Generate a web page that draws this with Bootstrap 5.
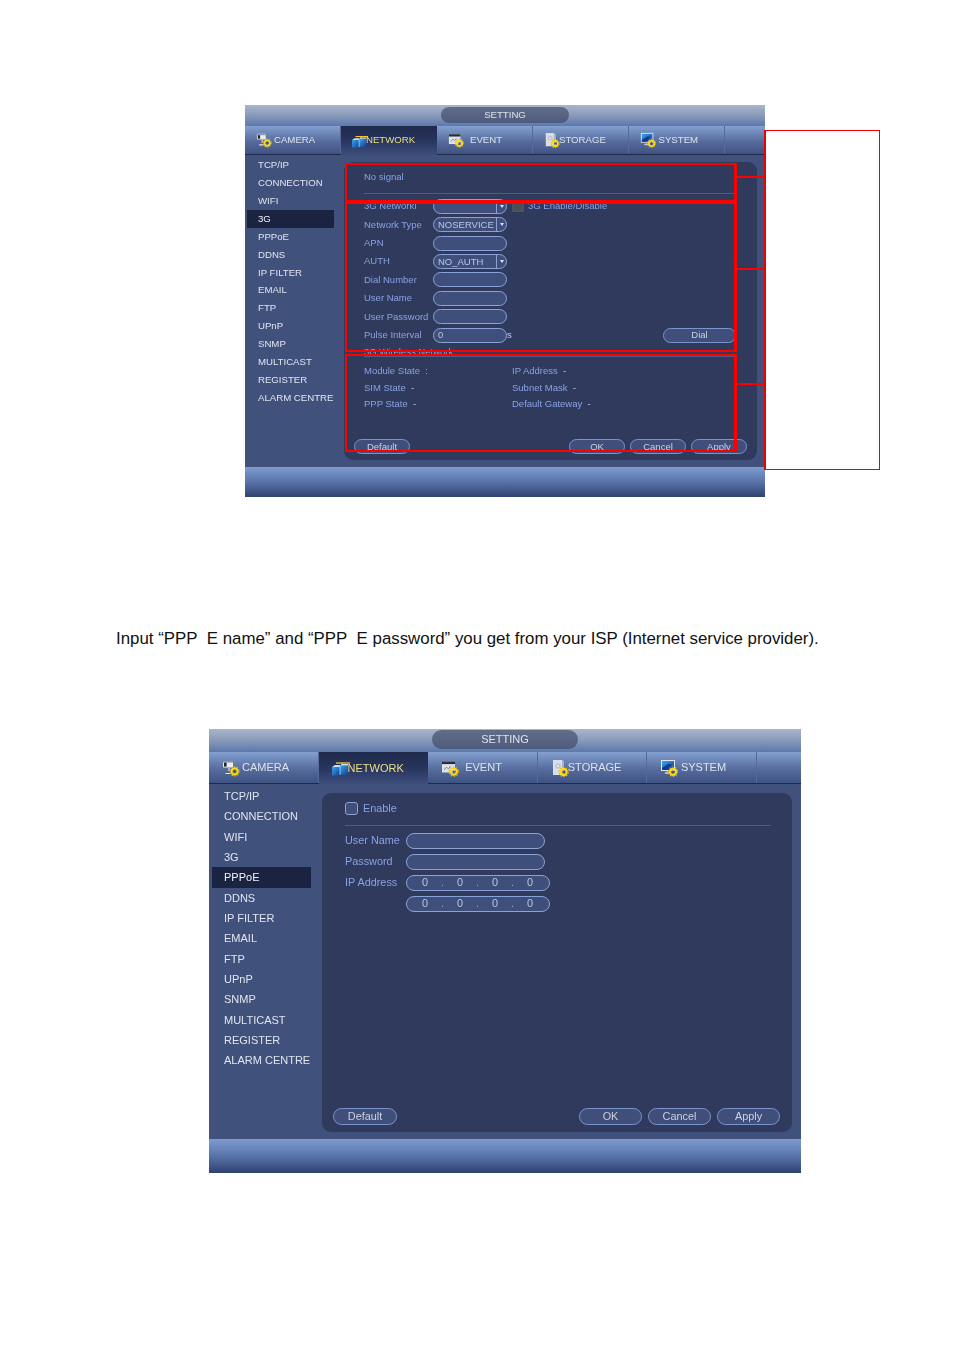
<!DOCTYPE html>
<html lang="en">
<head>
<meta charset="utf-8">
<title>PPPoE setting</title>
<link rel="stylesheet" href="https://cdn.jsdelivr.net/npm/bootstrap@5.3.0/dist/css/bootstrap.min.css">
<style>
html,body{background:#fff;margin:0}
body{font-family:"Liberation Sans",Arial,sans-serif;color:#000;height:1350px;overflow:hidden}
.shot-wrap{position:relative}
.wrap-a{margin:105px 0 0 245px;width:520px}
.wrap-b{margin:0 0 0 209px;width:592px}
.dvr{background:#40517c;display:flex;flex-direction:column;filter:blur(.4px);overflow:hidden}
.dvr-a{--fs:9.65px;--fa:9.5px;--ic:16px;height:392px;--top:21px;--tabs:29px;--foot:30px;--tabw:96px;--pill:128px;--pillh:16px;--icl:11px;--side:99px;--item:17.93px;--sel:87px;--seli:11px;--sm:2px;--pt:2px}
.dvr-b{--fs:11px;--fa:10.85px;--ic:18px;height:444px;--top:23px;--tabs:32px;--foot:34px;--tabw:109.6px;--pill:146px;--pillh:19px;--icl:13px;--side:113px;--item:20.33px;--sel:99px;--seli:12px;--sm:3px;--pt:1px}
.dvr-top{height:var(--top);flex:none;background:linear-gradient(#a9b6ca,#8c9dbb 45%,#5d78ad);padding-top:var(--pt)}
.dvr-pill{width:var(--pill);height:var(--pillh);border-radius:calc(var(--pillh)/2);background:linear-gradient(#626d86,#4d5b7f);color:#dfe3ea;font-size:var(--fs);line-height:var(--pillh)}
.dvr-tabs{height:var(--tabs);flex:none;background:linear-gradient(#83a0d0,#566c9c 55%,#3f5383);border-bottom:1px solid #1e2a4a;flex-wrap:nowrap}
.dvr-tab{width:var(--tabw);flex:none;padding:0 0 0 var(--icl);border-right:1px solid #56699a;color:#dde2ee;font-size:var(--fs);white-space:nowrap;height:100%}
.dvr-tab:hover,.dvr-tab:focus{color:#dde2ee}
.dvr-tab svg{width:var(--ic);height:var(--ic);flex:none}
.dvr-tab.is-on{background:linear-gradient(#1f2a4b,#26335a 45%,#3d4e7b);color:#ecdf86;border-right:0;height:calc(100% + 1px)}
.gap1 svg{margin-right:2px}.gap2 svg{margin-right:-2px}.gap3 svg{margin-right:6px}.gap4 svg{margin-right:-1px}.gap5 svg{margin-right:2.5px}
.dvr-body{flex:1 1 auto;min-height:0}
.dvr-side{width:var(--side);flex:none;padding-top:1px}
.dvr-b .dvr-side{padding-top:2px}
.dvr-link{display:block;width:var(--sel);margin-left:var(--sm);padding:0 0 0 var(--seli);height:var(--item);line-height:var(--item);color:#e1e5ef;font-size:var(--fs);white-space:nowrap}
.dvr-link:hover,.dvr-link:focus{color:#e1e5ef}
.dvr-link.is-on{background:#1a2340;color:#f1f3f8}
.dvr-panel{background:#303a5c;border-radius:9px}
.dvr-a .dvr-panel{width:413px;height:298px;margin:7px 0 0 0;padding:6px 10px 6px}
.dvr-b .dvr-panel{width:470px;height:339px;margin:9px 0 0 0;padding:5px 12px 7px 11px}
.dvr-area{font-size:var(--fa);color:#88a2e6}
.dvr-a .dvr-area{padding:0 10px}
.dvr-b .dvr-area{padding:0 9px 0 12px}
.dvr-rule{height:1px;background:#4c5c86}
.dvr-a .line-h{height:18px}
.dvr-a .line-f{height:18.43px}
.dvr-a .lab{width:69px;flex:none;white-space:nowrap}
.dvr-b .line-h{height:20px}
.dvr-b .line-f{height:21px}
.dvr-b .lab{width:61px;flex:none;white-space:nowrap}
.dvr-a .mt-rule{margin-top:7px}
.dvr-a .mt-first{margin-top:3px}
.dvr-b .mt-rule{margin-top:7px}
.dvr-b .mt-first{margin-top:3.5px}
.form-control.dvr-field{flex:none;min-height:0;padding:0 0 0 4px;background:#3f4f7b;border:1px solid #8ba2d8;border-radius:8px;color:#bcc5dc;font-size:var(--fa);line-height:1;box-shadow:none;font-family:inherit}
.dvr-a .form-control.dvr-field{width:74px;height:15px}
.dvr-b .form-control.dvr-field{width:139px;height:16px;margin-top:1.5px}
.dvr-b .form-control.dvr-ip{width:144px;padding-left:14px}
.dvr-ip i{font-style:normal;display:block;text-align:center;flex:none}
.dvr-ip .z{width:8px}.dvr-ip .d{width:27px;color:#97a4c6}
.dvr-arrow{margin-left:auto;width:10px;height:100%;border-left:1px solid #8ba2d8;flex:none;position:relative}
.dvr-arrow::after{content:"";position:absolute;left:3px;top:5px;border:2px solid transparent;border-top:3px solid #dfe4f0}
.form-check-input.dvr-chk{margin:0;flex:none;background-color:#3f4f7b;border:1px solid #8ba2d8;border-radius:3px;width:13px;height:13px}
.dvr-chk-txt{margin-left:5px}
.form-check-input.dvr-chk-off{background-color:#4c4f58;border-color:#53565f;width:12px;height:11px;margin:0 4px 0 5px;border-radius:1px;opacity:1}
.dvr-legend{height:9px;line-height:9px;white-space:nowrap;margin-top:3px}
.dvr-a .stat-line{height:16.5px}
.dvr-a .stat-c{width:148px;flex:none;white-space:nowrap}
.stat-v{color:#c8d0e4}
.dvr-a .mt-stat{margin-top:5.5px}
.btn.dvr-btn{padding:0;background:#3f4e7b;border:1px solid #7c94cc;color:#ccd1df;font-size:var(--fa);line-height:1;font-family:inherit;flex:none;display:flex;align-items:center;justify-content:center}
.dvr-a .btn.dvr-btn{width:56px;height:15px;border-radius:8px}
.dvr-a .btn.dvr-dial{width:73px;margin-right:1px}
.dvr-b .btn.dvr-btn{width:63px;height:17px;border-radius:9px}
.dvr-b .btn.dvr-wide{width:64px}
.dvr-a .dvr-foot{gap:5px}
.dvr-b .dvr-foot{gap:6px}
.dvr-bottom{height:var(--foot);flex:none;background:linear-gradient(#7d9ccf,#5d78ae 45%,#2f4270);margin-top:0}
.mark-box{position:absolute;border:2px solid #f00;pointer-events:none}
.mark-r{border-right-width:3.5px}
.mark-1{left:100px;top:58px;width:392px;height:38.5px}
.mark-2{left:100px;top:96.5px;width:392px;height:150.5px}
.mark-3{left:100px;top:249px;width:392px;height:98px}
.mark-line{position:absolute;left:492px;width:27px;height:2px;background:#f00}
.ml-1{top:70.5px}.ml-2{top:162.5px}.ml-3{top:278px}
.mark-brace{position:absolute;left:518.5px;top:24.5px;width:116.5px;height:340px;border:1px solid #e00;border-left-width:2px;border-top-width:1.5px}
.doc-text{margin:130px 0 78px 116px;font-size:16.85px;line-height:24px;white-space:nowrap;color:#111}
</style>
</head>
<body>
<svg width="0" height="0" class="d-block position-absolute">
  <defs>
    <g id="gear">
      <circle cx="0" cy="0" r="3.1" fill="none" stroke="#ffdc14" stroke-width="2.1"/>
      <circle cx="0" cy="0" r="4.6" fill="none" stroke="#e0bc0c" stroke-width="1.2" stroke-dasharray="1.4 1.5"/>
      <circle cx="0" cy="0" r="1.2" fill="#5a5a3a"/>
    </g>
  </defs>
</svg>

<div class="shot-wrap wrap-a">
  <div class="dvr dvr-a">
    <div class="dvr-top d-flex justify-content-center"><div class="dvr-pill text-center">SETTING</div></div>
    <nav class="nav dvr-tabs">
      <a class="nav-link dvr-tab gap1 d-flex align-items-center" href="#"><svg viewBox="0 0 18 18"><use href="#ic-cam"/></svg>CAMERA</a>
      <a class="nav-link dvr-tab gap2 is-on d-flex align-items-center" href="#"><svg viewBox="0 0 18 18"><use href="#ic-net"/></svg>NETWORK</a>
      <a class="nav-link dvr-tab gap3 d-flex align-items-center" href="#"><svg viewBox="0 0 18 18"><use href="#ic-evt"/></svg>EVENT</a>
      <a class="nav-link dvr-tab gap4 d-flex align-items-center" href="#"><svg viewBox="0 0 18 18"><use href="#ic-sto"/></svg>STORAGE</a>
      <a class="nav-link dvr-tab gap5 d-flex align-items-center" href="#"><svg viewBox="0 0 18 18"><use href="#ic-sys"/></svg>SYSTEM</a>
    </nav>
    <div class="dvr-body d-flex">
      <div class="dvr-side">
        <a class="dvr-link text-decoration-none" href="#">TCP/IP</a>
        <a class="dvr-link text-decoration-none" href="#">CONNECTION</a>
        <a class="dvr-link text-decoration-none" href="#">WIFI</a>
        <a class="dvr-link text-decoration-none is-on" href="#">3G</a>
        <a class="dvr-link text-decoration-none" href="#">PPPoE</a>
        <a class="dvr-link text-decoration-none" href="#">DDNS</a>
        <a class="dvr-link text-decoration-none" href="#">IP FILTER</a>
        <a class="dvr-link text-decoration-none" href="#">EMAIL</a>
        <a class="dvr-link text-decoration-none" href="#">FTP</a>
        <a class="dvr-link text-decoration-none" href="#">UPnP</a>
        <a class="dvr-link text-decoration-none" href="#">SNMP</a>
        <a class="dvr-link text-decoration-none" href="#">MULTICAST</a>
        <a class="dvr-link text-decoration-none" href="#">REGISTER</a>
        <a class="dvr-link text-decoration-none" href="#">ALARM CENTRE</a>
      </div>
      <div class="dvr-panel d-flex flex-column">
        <div class="dvr-area flex-grow-1">
          <div class="line-h d-flex align-items-center">No signal</div>
          <div class="dvr-rule mt-rule"></div>
          <div class="mt-first">
            <div class="line-f d-flex align-items-center"><span class="lab">3G NetworkI</span><div class="form-control dvr-field d-flex align-items-center"><span class="dvr-arrow"></span></div><input class="form-check-input dvr-chk-off" type="checkbox" disabled aria-label="3G Enable/Disable"><span>3G Enable/Disable</span></div>
            <div class="line-f d-flex align-items-center"><span class="lab">Network Type</span><div class="form-control dvr-field d-flex align-items-center">NOSERVICE<span class="dvr-arrow"></span></div></div>
            <div class="line-f d-flex align-items-center"><span class="lab">APN</span><div class="form-control dvr-field"></div></div>
            <div class="line-f d-flex align-items-center"><span class="lab">AUTH</span><div class="form-control dvr-field d-flex align-items-center">NO_AUTH<span class="dvr-arrow"></span></div></div>
            <div class="line-f d-flex align-items-center"><span class="lab">Dial Number</span><div class="form-control dvr-field"></div></div>
            <div class="line-f d-flex align-items-center"><span class="lab">User Name</span><div class="form-control dvr-field"></div></div>
            <div class="line-f d-flex align-items-center"><span class="lab">User Password</span><div class="form-control dvr-field"></div></div>
            <div class="line-f d-flex align-items-center"><span class="lab">Pulse Interval</span><div class="form-control dvr-field d-flex align-items-center">0</div><span class="stat-v">s</span><button type="button" class="btn dvr-btn dvr-dial ms-auto">Dial</button></div>
          </div>
          <div class="dvr-legend">3G Wireless Network</div>
          <div class="dvr-rule"></div>
          <div class="mt-stat">
            <div class="stat-line d-flex align-items-center"><span class="stat-c">Module State &nbsp;:</span><span>IP Address &nbsp;<span class="stat-v">-</span></span></div>
            <div class="stat-line d-flex align-items-center"><span class="stat-c">SIM State &nbsp;<span class="stat-v">-</span></span><span>Subnet Mask &nbsp;<span class="stat-v">-</span></span></div>
            <div class="stat-line d-flex align-items-center"><span class="stat-c">PPP State &nbsp;<span class="stat-v">-</span></span><span>Default Gateway &nbsp;<span class="stat-v">-</span></span></div>
          </div>
        </div>
        <div class="dvr-foot d-flex">
          <button type="button" class="btn dvr-btn me-auto">Default</button>
          <button type="button" class="btn dvr-btn">OK</button>
          <button type="button" class="btn dvr-btn">Cancel</button>
          <button type="button" class="btn dvr-btn">Apply</button>
        </div>
      </div>
    </div>
    <div class="dvr-bottom"></div>
  </div>
  <div class="mark-box mark-r mark-1"></div>
  <div class="mark-box mark-r mark-2"></div>
  <div class="mark-box mark-r mark-3"></div>
  <div class="mark-line ml-1"></div>
  <div class="mark-line ml-2"></div>
  <div class="mark-line ml-3"></div>
  <div class="mark-brace"></div>
</div>

<p class="doc-text">Input “PPP&nbsp;&nbsp;E name” and “PPP&nbsp;&nbsp;E password” you get from your ISP (Internet service provider).</p>

<div class="shot-wrap wrap-b">
  <div class="dvr dvr-b">
    <div class="dvr-top d-flex justify-content-center"><div class="dvr-pill text-center">SETTING</div></div>
    <nav class="nav dvr-tabs">
      <a class="nav-link dvr-tab gap1 d-flex align-items-center" href="#"><svg viewBox="0 0 18 18"><use href="#ic-cam"/></svg>CAMERA</a>
      <a class="nav-link dvr-tab gap2 is-on d-flex align-items-center" href="#"><svg viewBox="0 0 18 18"><use href="#ic-net"/></svg>NETWORK</a>
      <a class="nav-link dvr-tab gap3 d-flex align-items-center" href="#"><svg viewBox="0 0 18 18"><use href="#ic-evt"/></svg>EVENT</a>
      <a class="nav-link dvr-tab gap4 d-flex align-items-center" href="#"><svg viewBox="0 0 18 18"><use href="#ic-sto"/></svg>STORAGE</a>
      <a class="nav-link dvr-tab gap5 d-flex align-items-center" href="#"><svg viewBox="0 0 18 18"><use href="#ic-sys"/></svg>SYSTEM</a>
    </nav>
    <div class="dvr-body d-flex">
      <div class="dvr-side">
        <a class="dvr-link text-decoration-none" href="#">TCP/IP</a>
        <a class="dvr-link text-decoration-none" href="#">CONNECTION</a>
        <a class="dvr-link text-decoration-none" href="#">WIFI</a>
        <a class="dvr-link text-decoration-none" href="#">3G</a>
        <a class="dvr-link text-decoration-none is-on" href="#">PPPoE</a>
        <a class="dvr-link text-decoration-none" href="#">DDNS</a>
        <a class="dvr-link text-decoration-none" href="#">IP FILTER</a>
        <a class="dvr-link text-decoration-none" href="#">EMAIL</a>
        <a class="dvr-link text-decoration-none" href="#">FTP</a>
        <a class="dvr-link text-decoration-none" href="#">UPnP</a>
        <a class="dvr-link text-decoration-none" href="#">SNMP</a>
        <a class="dvr-link text-decoration-none" href="#">MULTICAST</a>
        <a class="dvr-link text-decoration-none" href="#">REGISTER</a>
        <a class="dvr-link text-decoration-none" href="#">ALARM CENTRE</a>
      </div>
      <div class="dvr-panel d-flex flex-column">
        <div class="dvr-area flex-grow-1">
          <div class="line-h d-flex align-items-center"><input class="form-check-input dvr-chk" type="checkbox" aria-label="Enable"><span class="dvr-chk-txt">Enable</span></div>
          <div class="dvr-rule mt-rule"></div>
          <div class="mt-first">
            <div class="line-f d-flex align-items-center"><span class="lab">User Name</span><div class="form-control dvr-field"></div></div>
            <div class="line-f d-flex align-items-center"><span class="lab">Password</span><div class="form-control dvr-field"></div></div>
            <div class="line-f d-flex align-items-center"><span class="lab">IP Address</span><div class="form-control dvr-field dvr-ip d-flex align-items-center"><i class="z">0</i><i class="d">.</i><i class="z">0</i><i class="d">.</i><i class="z">0</i><i class="d">.</i><i class="z">0</i></div></div>
            <div class="line-f d-flex align-items-center"><span class="lab"></span><div class="form-control dvr-field dvr-ip d-flex align-items-center"><i class="z">0</i><i class="d">.</i><i class="z">0</i><i class="d">.</i><i class="z">0</i><i class="d">.</i><i class="z">0</i></div></div>
          </div>
        </div>
        <div class="dvr-foot d-flex">
          <button type="button" class="btn dvr-btn dvr-wide me-auto">Default</button>
          <button type="button" class="btn dvr-btn">OK</button>
          <button type="button" class="btn dvr-btn">Cancel</button>
          <button type="button" class="btn dvr-btn">Apply</button>
        </div>
      </div>
    </div>
    <div class="dvr-bottom"></div>
  </div>
</div>

<svg width="0" height="0" class="d-block position-absolute">
  <defs>
    <linearGradient id="blu" x1="0" y1="0" x2="1" y2="1"><stop offset="0" stop-color="#39a6ea"/><stop offset="1" stop-color="#0f3f9c"/></linearGradient>
    <symbol id="ic-cam" viewBox="0 0 18 18">
      <rect x="1" y="2" width="10" height="6.5" rx=".8" fill="#e9edf3"/>
      <rect x="1" y="2" width="10" height="1.6" fill="#8f97a8"/>
      <rect x="2" y="3.6" width="2.6" height="4" fill="#23262e"/>
      <path d="M7 9v3M3.5 14.5h5" stroke="#dfe4ee" stroke-width="1.2" fill="none"/>
      <use href="#gear" x="12.6" y="12.4"/>
    </symbol>
    <symbol id="ic-net" viewBox="0 0 18 18">
      <path d="M4 4h14" stroke="#f2c53a" stroke-width="1.3"/>
      <path d="M10 4v3" stroke="#f2c53a" stroke-width="1.2"/>
      <rect x="0" y="8" width="8" height="8.5" fill="url(#blu)"/>
      <rect x="8" y="6.5" width="8" height="9" fill="url(#blu)"/>
      <path d="M0 8l3-2h5v2zM8 6.5l2-1.5h6v1.5z" fill="#bfe2f7"/>
      <path d="M8 7v9" stroke="#cfe8f8" stroke-width=".7"/>
    </symbol>
    <symbol id="ic-evt" viewBox="0 0 18 18">
      <rect x="1" y="2.5" width="13" height="11" fill="#dfe3ea"/>
      <rect x="1" y="2.5" width="13" height="2.6" fill="#2a2d36"/>
      <path d="M3 11l2.5-3 2 2 2-3" stroke="#7d8aa8" stroke-width="1" fill="none"/>
      <use href="#gear" x="12.8" y="12.6"/>
    </symbol>
    <symbol id="ic-sto" viewBox="0 0 18 18">
      <path d="M2 1h9l2 2v13H2z" fill="#d9dfe9"/>
      <path d="M13 3v13H11V1z" fill="#aab4c6"/>
      <circle cx="7" cy="7" r="2.8" fill="#bcc5d4"/>
      <circle cx="7" cy="7" r="1" fill="#eef1f6"/>
      <use href="#gear" x="12.6" y="13"/>
    </symbol>
    <symbol id="ic-sys" viewBox="0 0 18 18">
      <rect x="1" y="1" width="14" height="11" fill="#e3e7ee"/>
      <rect x="2" y="2" width="12" height="9" fill="url(#blu)"/>
      <path d="M2 9l6-4 4 0-4 6H2z" fill="#0c3c96"/>
      <path d="M5 14h6" stroke="#cfd5e1" stroke-width="1.6"/>
      <path d="M7.5 12v2" stroke="#aab2c2" stroke-width="1.4"/>
      <use href="#gear" x="13" y="12.8"/>
    </symbol>
  </defs>
</svg>
</body>
</html>
